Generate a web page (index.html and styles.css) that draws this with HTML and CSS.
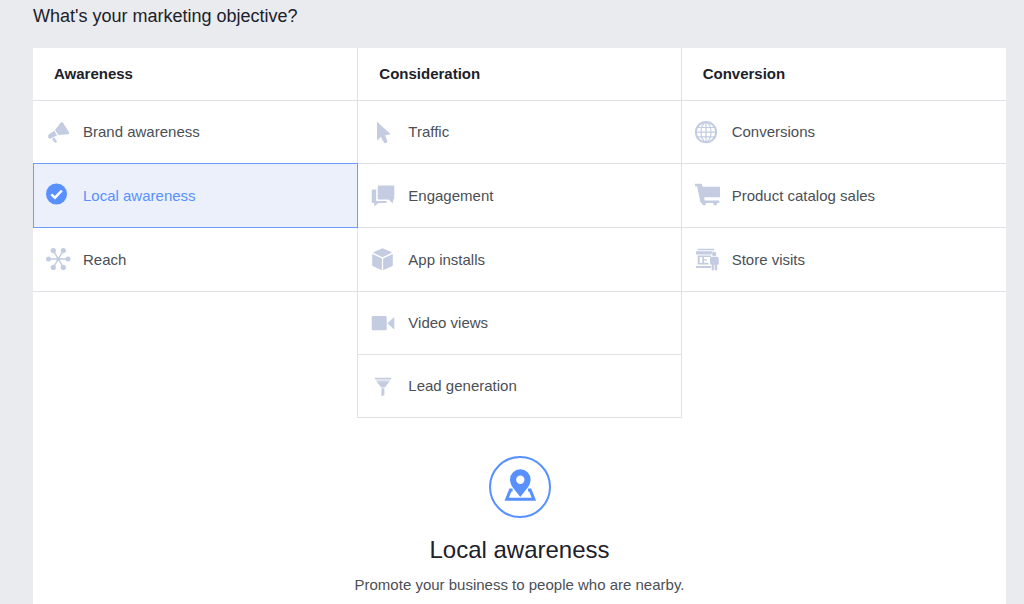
FILE: index.html
```html
<!DOCTYPE html>
<html lang="en">
<head>
<meta charset="utf-8">
<meta name="viewport" content="width=device-width, initial-scale=1">
<title>Marketing objective</title>
<link rel="stylesheet" href="styles.css">
</head>
<body>
<main class="page">
  <h1 class="page-title">What's your marketing objective?</h1>
  <div class="panel">
    <form class="objectives">
      <section class="column">
        <h2 class="column-title">Awareness</h2>
        <label class="option">
          <input class="option-input" type="radio" name="objective" value="brand">
          <svg class="icon" viewBox="0 0 24 24" aria-hidden="true"><path d="M14.800 2.600Q15.900 1.300 17 2.700L23.200 12.500Q23.500 14.200 22 14.200L12.400 15.100 9 10.100Z"/><path d="M8.300 10.800 11 15.500 4.800 18.600Q3 19.200 2.200 17.200 1.600 15.100 3.300 14Z"/><path d="M5.800 18.900 9 17.400 9.600 19.800 11.200 21.200 9.400 22.900 7.400 21.100Z"/></svg>
          <span>Brand awareness</span>
        </label>
        <label class="option option-selected">
          <input class="option-input" type="radio" name="objective" value="local" checked>
          <svg class="icon" viewBox="0 0 24 24" aria-hidden="true"><circle cx="10.500" cy="10" r="10.500"/><path class="tick" d="M5.300 10.300 9 13.700 15.800 6.500"/></svg>
          <span>Local awareness</span>
        </label>
        <label class="option">
          <input class="option-input" type="radio" name="objective" value="reach">
          <svg class="icon" viewBox="0 0 24 24" aria-hidden="true"><path class="line" d="M2.500 11H22M7.300 2.600 17.300 19.400M17.300 2.600 7.300 19.400"/><circle cx="2.500" cy="11" r="2.500"/><circle cx="22" cy="11" r="2.500"/><circle cx="7.300" cy="2.600" r="2.600"/><circle cx="17.300" cy="2.600" r="2.600"/><circle cx="7.300" cy="19.400" r="2.600"/><circle cx="17.300" cy="19.400" r="2.600"/><circle cx="12.300" cy="11" r="2"/></svg>
          <span>Reach</span>
        </label>
      </section>
      <section class="column column-middle">
        <h2 class="column-title">Consideration</h2>
        <label class="option">
          <input class="option-input" type="radio" name="objective" value="traffic">
          <svg class="icon" viewBox="0 0 24 24" aria-hidden="true"><path d="M6 1.700V20.400L9.900 17 13.300 23.300 16.700 22 14.200 15.300 19.800 14.300Z"/></svg>
          <span>Traffic</span>
        </label>
        <label class="option">
          <input class="option-input" type="radio" name="objective" value="engagement">
          <svg class="icon" viewBox="0 0 24 24" aria-hidden="true"><path d="M7.700 1.500H22.300Q23.300 1.500 23.300 2.500V14.500Q23.300 15.500 22.300 15.500L21.800 19.500 17.500 15.500H7.700Q6.700 15.500 6.700 14.500V2.500Q6.700 1.500 7.700 1.500Z"/><path d="M1.700 5.500H5.200V16.900H15.600V18.200Q15.600 19 14.800 19H7.500L3.200 22.300V19H1.700Q.7 19 .7 18V6.500Q.7 5.500 1.700 5.500Z"/></svg>
          <span>Engagement</span>
        </label>
        <label class="option">
          <input class="option-input" type="radio" name="objective" value="installs">
          <svg class="icon" viewBox="0 0 24 24" aria-hidden="true"><path d="M11.500.2 21.200 4.500 11.500 9.200 1.800 4.500Z"/><path d="M1.200 5.900 10.900 10.500V22.300L2 18.200Q1.200 17.800 1.200 17Z"/><path d="M21.800 5.900 12.100 10.500V22.300L21 18.200Q21.800 17.800 21.800 17Z"/></svg>
          <span>App installs</span>
        </label>
        <label class="option">
          <input class="option-input" type="radio" name="objective" value="video">
          <svg class="icon" viewBox="0 0 24 24" aria-hidden="true"><rect x=".7" y="5" width="15" height="14.300" rx="1.300"/><path d="M16.400 12.200 22.600 6.500Q23.300 6.300 23.300 7V17.500Q23.300 18.300 22.600 18Z"/></svg>
          <span>Video views</span>
        </label>
        <label class="option">
          <input class="option-input" type="radio" name="objective" value="leads">
          <svg class="icon" viewBox="0 0 24 24" aria-hidden="true"><path d="M3.500 3.800H20.500L19.900 5.200H4.100Z"/><path class="faint" d="M4.300 5.200H19.700L18.200 7.500H5.800Z"/><path d="M5.500 7.200H18.500L13.900 13.500H10.100Z"/><path d="M10.400 14.300H13.400V21L10.400 22.500Z"/></svg>
          <span>Lead generation</span>
        </label>
      </section>
      <section class="column">
        <h2 class="column-title">Conversion</h2>
        <label class="option">
          <input class="option-input" type="radio" name="objective" value="conversions">
          <svg class="icon" viewBox="0 0 24 24" aria-hidden="true"><circle class="ring" cx="11" cy="12.200" r="10.100"/><path class="thin" d="M11 2.500V22M1.500 12.200H20.500M3 7.500H19M3 16.900H19"/><ellipse class="thin" cx="11" cy="12.200" rx="5" ry="9.700"/></svg>
          <span>Conversions</span>
        </label>
        <label class="option">
          <input class="option-input" type="radio" name="objective" value="catalog">
          <svg class="icon" viewBox="0 0 24 24" aria-hidden="true"><path d="M0-.3H6Q6.800-.3 7 .6L7.500 2.700H25V13.300H9.200L9.700 16.500H24.300V19H6.500Q5.600 19 5.400 18.100L2 2.200H0Z"/><circle cx="9" cy="19.500" r="1.900"/><circle cx="20.200" cy="19.500" r="1.900"/></svg>
          <span>Product catalog sales</span>
        </label>
        <label class="option">
          <input class="option-input" type="radio" name="objective" value="store">
          <svg class="icon" viewBox="0 0 24 24" aria-hidden="true"><path d="M2.700.7H19V2.200H2.700ZM1.500 3.200H18Q16.500 4.300 16.500 6.600H1V4Z"/><path d="M2.700 7.500H16V9H4.700V15H8V16.500H2.700Z"/><path d="M7.300 9H9V14.800H13.500V16.500H7.300ZM9 11.300H12V12.500H9Z"/><path d="M1 18H16V20H1Z"/><circle cx="19.200" cy="6" r="2.200"/><path d="M16.800 8.700H21.700Q23.800 8.700 23.800 10.800V16.500H22.200V22.300H19.700V17H18.900V22.300H16.700V16.500H15V10.800Q15 8.700 16.800 8.700Z"/></svg>
          <span>Store visits</span>
        </label>
      </section>
    </form>
    <section class="summary">
      <svg class="badge" viewBox="0 0 62 62" aria-hidden="true"><circle class="badge-ring" cx="31" cy="31" r="30"/><path class="badge-map" d="M23.600 34H21.400L17.700 43.300H44.900L41.200 34H39"/><path class="badge-pin" fill-rule="evenodd" d="M31.300 13.200A10.300 10.300 0 0 1 41.600 23.500C41.600 30.500 35 35.500 31.300 40.900 27.600 35.500 21 30.500 21 23.500A10.300 10.300 0 0 1 31.300 13.200ZM31.300 19.500A4.200 4.200 0 1 0 31.300 27.900 4.200 4.200 0 1 0 31.300 19.500Z"/></svg>
      <h2 class="summary-title">Local awareness</h2>
      <p class="summary-text">Promote your business to people who are nearby.</p>
    </section>
  </div>
</main>
</body>
</html>
```

FILE: styles.css
```css
* {
  box-sizing: border-box;
}

body {
  margin: 0;
  background: #e9ebee;
  color: #4b4f56;
  font-family: "Liberation Sans", Arial, sans-serif;
  font-size: 15px;
  line-height: 20px;
}

h1,
h2,
p {
  margin: 0;
}

.page {
  display: flex;
  flex-direction: column;
  min-height: 100vh;
  padding: 0 18px 0 33px;
}

.page-title {
  padding: 4px 0 20px;
  color: #1d2129;
  font-size: 18px;
  font-weight: 400;
  line-height: 24px;
}

.panel {
  flex: 1;
  background: #fff;
}

.objectives {
  display: grid;
  grid-template-columns: repeat(3, 1fr);
  grid-template-rows: 53px 63px 64px 64px 63px 63px;
}

.column {
  display: grid;
  grid-row: 1 / -1;
  grid-template-rows: subgrid;
}

.column-middle {
  border: solid #dfe1e5;
  border-width: 0 1px;
}

.column-title {
  padding: 16px 21px;
  border-bottom: 1px solid #dfe1e5;
  color: #1d2129;
  font-size: 15px;
  font-weight: 700;
}

.option {
  position: relative;
  display: flex;
  align-items: center;
  gap: 13px;
  padding: 0 13px;
  border-bottom: 1px solid #dfe1e5;
  cursor: pointer;
}

.option-selected {
  z-index: 1;
  margin: -1px -1px 0 0;
  padding: 0 12px;
  border: 1px solid #6b9dff;
  background: #ecf0fa;
  color: #5890ff;
}

.option-input {
  position: absolute;
  margin: 0;
  opacity: 0;
}

.icon {
  flex: none;
  width: 24px;
  height: 24px;
  overflow: visible;
  fill: #c3cce1;
}

.option-selected .icon {
  fill: #5890ff;
}

.tick,
.line,
.ring,
.thin {
  fill: none;
  stroke: #c3cce1;
}

.tick {
  stroke: #fff;
  stroke-width: 2.5;
}

.line {
  stroke-width: 1.4;
}

.ring {
  stroke-width: 2;
}

.thin {
  stroke-width: 1.2;
}

.faint {
  opacity: 0.5;
}

.summary {
  display: flex;
  flex-direction: column;
  align-items: center;
  padding: 38px 20px 8px;
  text-align: center;
}

.badge {
  width: 62px;
  height: 62px;
}

.badge-ring,
.badge-map {
  fill: none;
  stroke: #5890ff;
  stroke-width: 2;
}

.badge-map {
  stroke-width: 3;
}

.badge-pin {
  fill: #5890ff;
}

.option-selected .tick {
  fill: none;
}

.summary-title {
  margin: 16px 0 9px;
  color: #1d2129;
  font-size: 24px;
  font-weight: 400;
  line-height: 32px;
}
```
